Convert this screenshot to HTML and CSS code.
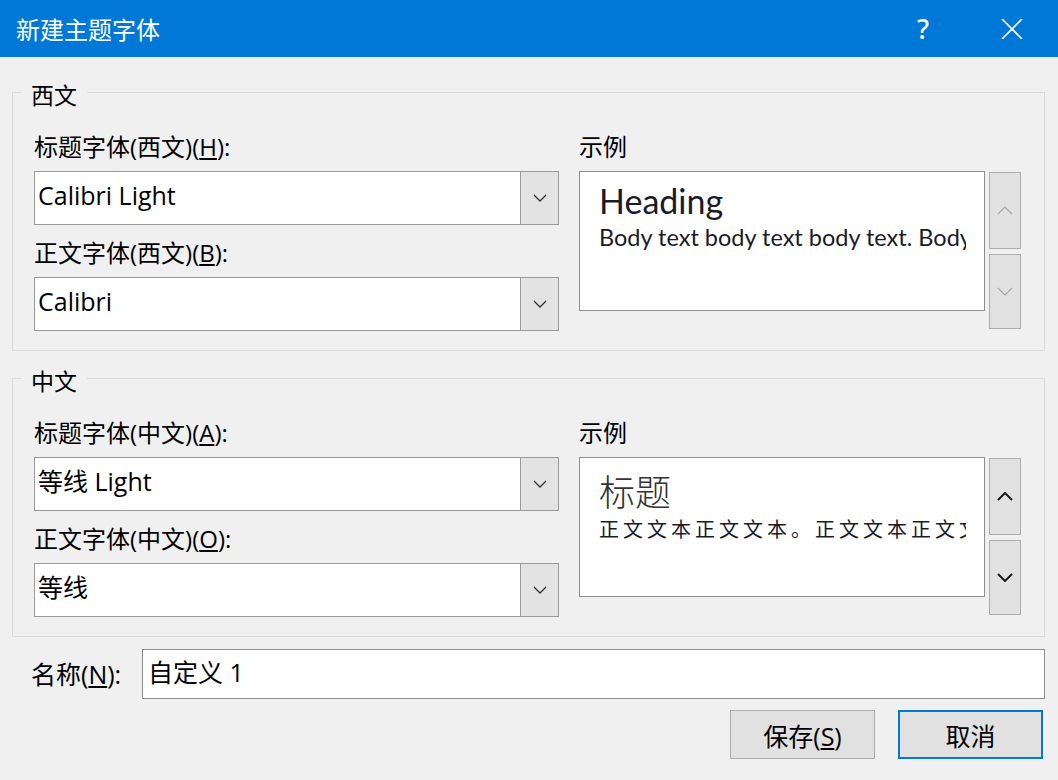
FILE: index.html
```html
<!DOCTYPE html>
<html lang="zh-CN">
<head>
    <meta charset="UTF-8">
    <title>新建主题字体</title>
    <link rel="stylesheet" href="styles.css">
</head>
<body>
    <div class="titlebar">
        <span class="title">新建主题字体</span>
        <span class="tb-btn help">?</span>
        <span class="tb-btn close">
            <svg width="22" height="20" viewBox="0 0 22 20"><path d="M1 0 L21 20 M21 0 L1 20" stroke="#fff" stroke-width="1.6" fill="none"/></svg>
        </span>
    </div>

    <div class="content">
        <section class="group">
            <span class="group-title">西文</span>
            <div class="group-grid">
                <div class="fields">
                    <div class="field-label">标题字体(西文)(<u>H</u>):</div>
                    <div class="combo">
                        <span class="combo-value">Calibri Light</span>
                        <span class="combo-btn"><svg width="14" height="8" viewBox="0 0 14 8"><path d="M1 1 L7 7 L13 1" stroke="#333" stroke-width="1.3" fill="none"/></svg></span>
                    </div>
                    <div class="field-label second">正文字体(西文)(<u>B</u>):</div>
                    <div class="combo">
                        <span class="combo-value">Calibri</span>
                        <span class="combo-btn"><svg width="14" height="8" viewBox="0 0 14 8"><path d="M1 1 L7 7 L13 1" stroke="#333" stroke-width="1.3" fill="none"/></svg></span>
                    </div>
                </div>
                <div class="sample">
                    <div class="field-label">示例</div>
                    <div class="sample-row">
                        <div class="sample-box">
                            <div class="sample-text">
                                <div class="sample-heading latin">Heading</div>
                                <div class="sample-body latin">Body text body text body text. Body text body text.</div>
                            </div>
                        </div>
                        <div class="spin disabled">
                            <span class="spin-btn up"><svg width="16" height="9" viewBox="0 0 16 9"><path d="M1 8 L8 1 L15 8" fill="none"/></svg></span>
                            <span class="spin-btn down"><svg width="16" height="9" viewBox="0 0 16 9"><path d="M1 1 L8 8 L15 1" fill="none"/></svg></span>
                        </div>
                    </div>
                </div>
            </div>
        </section>

        <section class="group second-group">
            <span class="group-title">中文</span>
            <div class="group-grid">
                <div class="fields">
                    <div class="field-label">标题字体(中文)(<u>A</u>):</div>
                    <div class="combo">
                        <span class="combo-value">等线 Light</span>
                        <span class="combo-btn"><svg width="14" height="8" viewBox="0 0 14 8"><path d="M1 1 L7 7 L13 1" stroke="#333" stroke-width="1.3" fill="none"/></svg></span>
                    </div>
                    <div class="field-label second">正文字体(中文)(<u>O</u>):</div>
                    <div class="combo">
                        <span class="combo-value">等线</span>
                        <span class="combo-btn"><svg width="14" height="8" viewBox="0 0 14 8"><path d="M1 1 L7 7 L13 1" stroke="#333" stroke-width="1.3" fill="none"/></svg></span>
                    </div>
                </div>
                <div class="sample">
                    <div class="field-label">示例</div>
                    <div class="sample-row">
                        <div class="sample-box">
                            <div class="sample-text">
                                <div class="sample-heading cjk">标题</div>
                                <div class="sample-body cjk">正文文本正文文本。正文文本正文文本。</div>
                            </div>
                        </div>
                        <div class="spin">
                            <span class="spin-btn up"><svg width="16" height="9" viewBox="0 0 16 9"><path d="M1 8 L8 1 L15 8" fill="none"/></svg></span>
                            <span class="spin-btn down"><svg width="16" height="9" viewBox="0 0 16 9"><path d="M1 1 L8 8 L15 1" fill="none"/></svg></span>
                        </div>
                    </div>
                </div>
            </div>
        </section>

        <div class="name-row">
            <span class="name-label">名称(<u>N</u>):</span>
            <div class="name-input">自定义 1</div>
        </div>

        <div class="buttons">
            <button class="btn">保存(<u>S</u>)</button>
            <button class="btn default">取消</button>
        </div>
    </div>
</body>
</html>
```

FILE: styles.css
```css
body {
    margin: 0;
    background-color: #f0f0f0;
    font-family: "Open Sans", "Noto Sans CJK SC", sans-serif;
    color: #000;
}
u {
    text-underline-offset: 2px;
}
.titlebar {
    height: 57px;
    background-color: #0078d7;
    color: #fff;
    display: flex;
    align-items: center;
}
.title {
    flex: 1;
    padding-left: 16px;
    font-family: "Noto Sans CJK SC", sans-serif;
    font-size: 24px;
    line-height: 1;
}
.tb-btn {
    height: 57px;
    display: flex;
    align-items: center;
    justify-content: center;
}
.help {
    width: 86px;
    font-size: 27px;
    font-weight: 500;
    font-family: "Noto Sans", sans-serif;
}
.close {
    width: 92px;
}
.content {
    padding: 35px 13px 0 12px;
}
.group {
    position: relative;
    border: 1px solid #dcdcdc;
    padding: 41px 23px 19px 21px;
}
.second-group {
    margin-top: 27px;
}
.group-title {
    position: absolute;
    top: -11px;
    left: 8px;
    padding: 0 10px;
    background-color: #f0f0f0;
    font-family: "Noto Sans CJK SC", sans-serif;
    font-size: 23px;
    line-height: 24px;
}
.group-grid {
    display: grid;
    grid-template-columns: 525px 1fr;
    column-gap: 20px;
}
.field-label {
    font-size: 24px;
    line-height: 26px;
    height: 26px;
    white-space: nowrap;
}
.field-label.second {
    margin-top: 15px;
}
.combo {
    margin-top: 11px;
    height: 54px;
    box-sizing: border-box;
    border: 1px solid #9a9a9a;
    background-color: #fff;
    display: flex;
}
.combo-value {
    flex: 1;
    padding-left: 3px;
    font-size: 25px;
    line-height: 46px;
}
.combo-btn {
    width: 37px;
    border-left: 1px solid #9a9a9a;
    background-color: #e3e3e3;
    display: flex;
    align-items: center;
    justify-content: center;
}
.sample-row {
    margin-top: 11px;
    display: flex;
    gap: 4px;
}
.sample-box {
    width: 406px;
    height: 140px;
    box-sizing: border-box;
    border: 1px solid #8c8c8c;
    background-color: #fff;
}
.sample-text {
    margin-left: 19px;
    width: 367px;
    overflow: hidden;
    white-space: nowrap;
    color: #1a1a28;
}
.sample-heading.latin {
    margin-top: 10px;
    font-family: "Lato", sans-serif;
    font-size: 34px;
    line-height: 38px;
}
.sample-body.latin {
    margin-top: 3px;
    font-family: "Lato", sans-serif;
    font-size: 23.5px;
    line-height: 28px;
}
.sample-heading.cjk {
    margin-top: 11px;
    font-family: "Noto Sans CJK SC", sans-serif;
    font-weight: 300;
    font-size: 36px;
    line-height: 42px;
    color: #333;
}
.sample-body.cjk {
    margin-top: 4px;
    font-family: "Noto Sans CJK SC", sans-serif;
    font-size: 20px;
    line-height: 28px;
    letter-spacing: 4px;
}
.spin {
    width: 32px;
    margin-top: 1px;
    display: flex;
    flex-direction: column;
    gap: 5px;
}
.spin-btn {
    box-sizing: border-box;
    border: 1px solid #adadad;
    background-color: #e1e1e1;
    display: flex;
    align-items: center;
    justify-content: center;
}
.spin-btn.up {
    height: 77px;
}
.spin-btn.down {
    height: 75px;
}
.spin-btn path {
    stroke: #1a1a1a;
    stroke-width: 2;
}
.spin.disabled .spin-btn path {
    stroke: #a6a6a6;
    stroke-width: 1.2;
}
.name-row {
    margin-top: 12px;
    padding-left: 19px;
    display: flex;
    align-items: center;
}
.name-label {
    width: 111px;
    font-size: 25px;
    line-height: 28px;
}
.name-input {
    flex: 1;
    height: 50px;
    box-sizing: border-box;
    border: 1px solid #8c8c8c;
    background-color: #fff;
    padding-left: 5px;
    font-size: 25px;
    line-height: 44px;
}
.buttons {
    margin-top: 11px;
    padding-right: 2px;
    display: flex;
    justify-content: flex-end;
    gap: 23px;
}
.btn {
    width: 145px;
    height: 49px;
    box-sizing: border-box;
    border: 1px solid #adadad;
    background-color: #e1e1e1;
    font-family: "Open Sans", "Noto Sans CJK SC", sans-serif;
    font-size: 25px;
    color: #000;
    padding: 0;
}
.btn.default {
    border: 2px solid #0078d7;
}
```
